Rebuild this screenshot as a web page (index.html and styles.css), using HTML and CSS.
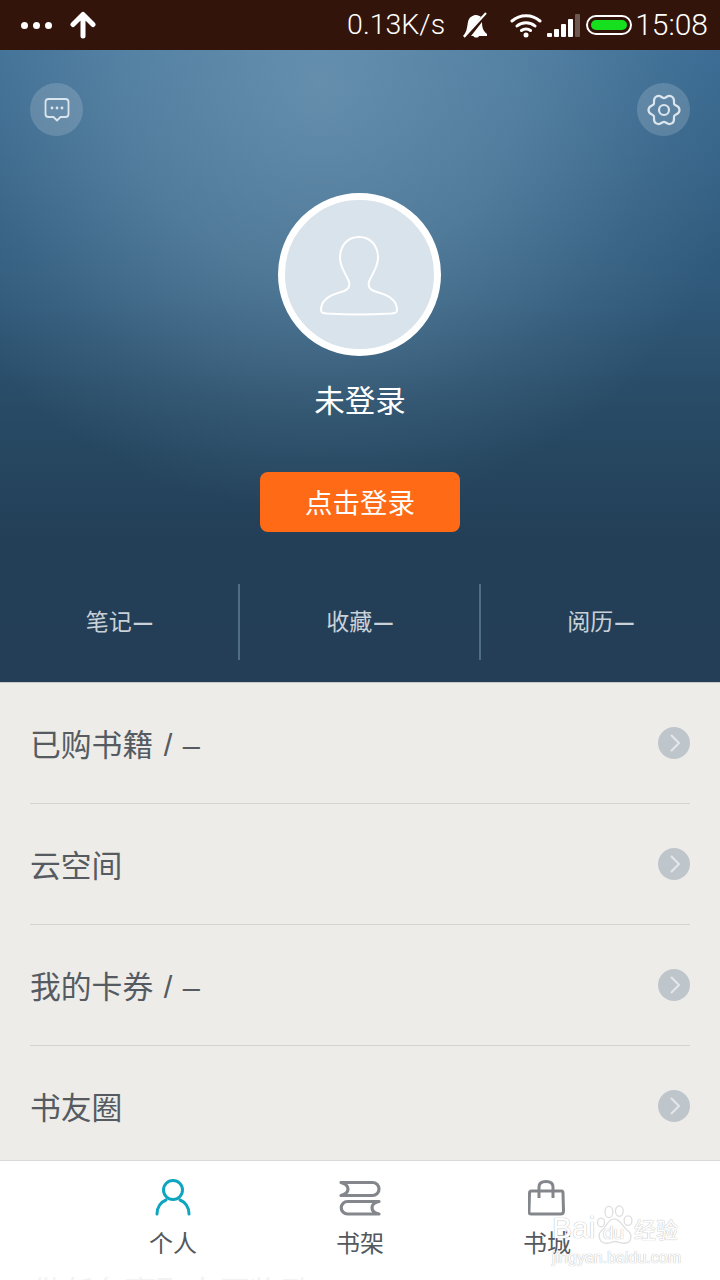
FILE: index.html
```html
<!DOCTYPE html>
<html lang="zh-CN">
  <head>
    <meta charset="UTF-8" />
    <meta name="viewport" content="width=device-width, initial-scale=1.0" />
    <title>个人</title>
    <link rel="stylesheet" href="styles.css">
  </head>
  <body>
    <div class="phone">
      <!-- status bar -->
      <div class="status">
        <div class="status-left">
          <div class="dots"><i></i><i></i><i></i></div>
          <svg class="up-arrow" width="26" height="28" viewBox="0 0 26 28">
            <path d="M13 25V4M3 13.500L13 3.500L23 13.500" fill="none" stroke="#fff" stroke-width="5" stroke-linecap="round" stroke-linejoin="round"/>
          </svg>
        </div>
        <div class="status-right">
          <span class="speed">0.13K/s</span>
          <svg class="bell" width="28" height="26" viewBox="0 0 28 26">
            <path d="M2 24C6 20 6 15 7 10C8 5 12 3 15 3C17 3 19 4 20 5L4 24Z" fill="#fff"/>
            <path d="M10 24L21 10C21 15 22 19 26 22L26 24H18C17.500 26 13 26 12.500 24Z" fill="#fff"/>
            <path d="M3 25L25 1" stroke="#fff" stroke-width="2"/>
          </svg>
          <svg class="wifi" width="32" height="26" viewBox="0 0 32 26">
            <path d="M2 9C10 2 22 2 30 9M7 14C12 9.500 20 9.500 25 14M11.500 18.500C14 16.500 18 16.500 20.500 18.500" fill="none" stroke="#fff" stroke-width="3" stroke-linecap="round"/>
            <circle cx="16" cy="23" r="2.500" fill="#fff"/>
          </svg>
          <div class="signal"><i class="s1"></i><i class="s2"></i><i class="s3"></i><i class="s4"></i><i class="s5"></i></div>
          <div class="battery"><div class="battery-fill"></div></div>
          <span class="clock">15:08</span>
        </div>
      </div>

      <!-- header with avatar -->
      <header class="hero">
        <div class="hero-top">
          <div class="round-btn">
            <svg width="26" height="26" viewBox="0 0 26 26">
              <path d="M4.500 2H21.500Q24.500 2 24.500 5V17Q24.500 20 21.500 20H16.500L13 23.500L9.500 20H4.500Q1.500 20 1.500 17V5Q1.500 2 4.500 2Z" fill="none" stroke="#dbe5ee" stroke-width="1.800" stroke-linejoin="round"/>
              <circle cx="8" cy="11" r="1.400" fill="#dbe5ee"/><circle cx="13" cy="11" r="1.400" fill="#dbe5ee"/><circle cx="18" cy="11" r="1.400" fill="#dbe5ee"/>
            </svg>
          </div>
          <div class="round-btn">
            <svg width="34" height="34" viewBox="0 0 34 34">
              <path d="M32.500 17C32.500 12.500 28.220 12.830 27.220 11.100C26.220 9.370 28.650 5.830 24.750 3.580C20.850 1.330 19 5.200 17 5.200C15 5.200 13.150 1.330 9.250 3.580C5.350 5.830 7.780 9.370 6.780 11.100C5.780 12.830 1.500 12.500 1.500 17C1.500 21.500 5.780 21.170 6.780 22.900C7.780 24.630 5.350 28.170 9.250 30.420C13.150 32.670 15 28.800 17 28.800C19 28.800 20.850 32.670 24.750 30.420C28.650 28.170 26.220 24.630 27.220 22.900C28.220 21.170 32.500 21.500 32.500 17Z" fill="none" stroke="#dbe5ee" stroke-width="2.200" stroke-linejoin="round"/>
              <circle cx="17" cy="17" r="5" fill="none" stroke="#dbe5ee" stroke-width="2.200"/>
            </svg>
          </div>
        </div>
        <div class="avatar">
          <svg width="82" height="82" viewBox="0 0 82 82">
            <path d="M41 3C29 3 22 12 22 24C22 34 29 41 31 48C33 55 27 57 20 59C10 62 3 68 3 76C3 79 5 79 9 79.500C25 80.500 57 80.500 73 79.500C77 79 79 79 79 76C79 68 72 62 62 59C55 57 49 55 51 48C53 41 60 34 60 24C60 12 53 3 41 3Z" fill="none" stroke="#fff" stroke-width="2"/>
          </svg>
        </div>
        <div class="user-name">未登录</div>
        <button class="login-btn">点击登录</button>
        <div class="stats">
          <div class="stat">笔记<span class="dash">–</span></div>
          <div class="stat">收藏<span class="dash">–</span></div>
          <div class="stat">阅历<span class="dash">–</span></div>
        </div>
      </header>

      <!-- menu list -->
      <ul class="menu">
        <li class="menu-row"><span class="row-label">已购书籍 / –</span><span class="chev"><svg width="32" height="32" viewBox="0 0 32 32"><path d="M13 8L21 16L13 24" fill="none" stroke="#e4e7ea" stroke-width="2"/></svg></span></li>
        <li class="menu-row"><span class="row-label">云空间</span><span class="chev"><svg width="32" height="32" viewBox="0 0 32 32"><path d="M13 8L21 16L13 24" fill="none" stroke="#e4e7ea" stroke-width="2"/></svg></span></li>
        <li class="menu-row"><span class="row-label">我的卡券 / –</span><span class="chev"><svg width="32" height="32" viewBox="0 0 32 32"><path d="M13 8L21 16L13 24" fill="none" stroke="#e4e7ea" stroke-width="2"/></svg></span></li>
        <li class="menu-row"><span class="row-label">书友圈</span><span class="chev"><svg width="32" height="32" viewBox="0 0 32 32"><path d="M13 8L21 16L13 24" fill="none" stroke="#e4e7ea" stroke-width="2"/></svg></span></li>
      </ul>

      <!-- bottom tabs -->
      <nav class="tabs">
        <div class="tab">
          <svg width="38" height="38" viewBox="0 0 38 38">
            <circle cx="19" cy="11" r="9.500" fill="none" stroke="#0ea5bf" stroke-width="3"/>
            <path d="M3 35C3 28 7 23 12 21M35 35C35 28 31 23 26 21" fill="none" stroke="#0ea5bf" stroke-width="3" stroke-linecap="round"/>
          </svg>
          <span>个人</span>
        </div>
        <div class="tab">
          <svg width="42" height="38" viewBox="0 0 42 38">
            <path d="M2 3.500H33.500A6.500 6.500 0 0 1 33.500 16.500H2Q9 14.500 9 10Q9 5.500 2 3.500Z" fill="none" stroke="#83878c" stroke-width="3.200" stroke-linejoin="round"/>
            <path d="M40 22.500H8.500A6.250 6.250 0 0 0 8.500 35H40Q33 33.500 33 28.750Q33 24 40 22.500Z" fill="none" stroke="#83878c" stroke-width="3.200" stroke-linejoin="round"/>
          </svg>
          <span>书架</span>
        </div>
        <div class="tab">
          <svg width="38" height="38" viewBox="0 0 38 38">
            <path d="M3.500 12H33.500Q35 12 35 14L35.500 32Q35.500 35 32.500 35H3.500Q0.500 35 1 32L1.500 14Q1.500 12 3.500 12Z" fill="none" stroke="#83878c" stroke-width="3"/>
            <path d="M11 19V8Q11 2.500 18 2.500Q25 2.500 25 8V19" fill="none" stroke="#83878c" stroke-width="3"/>
          </svg>
          <span>书城</span>
        </div>
        <div class="peek">做任务赢取丰厚奖励</div>
      </nav>

      <!-- baidu watermark -->
      <div class="watermark">
        <div class="wm-main">
          <span class="wm-bai">Bai</span>
          <span class="wm-paw">
            <svg width="46" height="46" viewBox="0 0 46 46">
              <g fill="#fff" stroke="#dedede" stroke-width="1.500">
                <ellipse cx="7" cy="20" rx="4" ry="5"/>
                <ellipse cx="16" cy="8" rx="4.500" ry="6.500"/>
                <ellipse cx="28" cy="7" rx="4.500" ry="6"/>
                <ellipse cx="38" cy="18" rx="4.500" ry="5.500"/>
                <path d="M22 16C15 16 14 24 8 29C2 34 5 44 13 44C18 44 19 42 23 42C27 42 29 44 34 44C42 44 44 34 37 29C31 24 29 16 22 16Z"/>
              </g>
            </svg>
            <span class="wm-du">du</span>
          </span>
          <span class="wm-cn">经验</span>
        </div>
        <div class="wm-sub">jingyan.baidu.com</div>
      </div>
    </div>
  </body>
</html>
```

FILE: styles.css
```css
:root {
  --status-bg: #33140a;
  --menu-bg: #edece9;
  --menu-text: #555b61;
  --line: #d4d3cf;
  --orange: #ff6a17;
}

* {
  box-sizing: border-box;
}

body {
  margin: 0;
  font-family: "Noto Sans CJK SC", "Noto Sans", sans-serif;
}

.phone {
  position: relative;
  width: 720px;
  height: 1280px;
  overflow: hidden;
  display: flex;
  flex-direction: column;
  background-color: var(--menu-bg);
}

/* status bar */
.status {
  flex: 0 0 50px;
  display: flex;
  justify-content: space-between;
  align-items: center;
  padding: 0 12px 0 21px;
  background-color: var(--status-bg);
  color: #fff;
}

.status-left,
.status-right {
  display: flex;
  align-items: center;
}

.dots {
  display: flex;
  gap: 5px;
  margin-right: 18px;
}

.dots i {
  width: 7px;
  height: 7px;
  border-radius: 50%;
  background-color: #fff;
}

.speed,
.clock {
  font-family: Roboto, "Liberation Sans", sans-serif;
  font-size: 30px;
  font-weight: 300;
  line-height: 50px;
}

.speed {
  font-size: 28.5px;
}

.bell {
  margin-left: 16px;
}

.wifi {
  margin-left: 21px;
}

.signal {
  display: flex;
  align-items: flex-end;
  gap: 2px;
  height: 24px;
  margin-left: 5px;
}

.signal i {
  width: 5px;
  border-radius: 1px;
  background-color: #fff;
}

.s1 { height: 4px; }
.s2 { height: 8px; }
.s3 { height: 13px; }
.s4 { height: 18px; }
.signal .s5 { height: 23px; background-color: #6d5850; }

.battery {
  width: 46px;
  height: 20px;
  margin-left: 6px;
  padding: 3px;
  border: 2px solid #fff;
  border-radius: 10px;
}

.battery-fill {
  height: 100%;
  border-radius: 6px;
  background-color: #16e01e;
}

.clock {
  margin-left: 3px;
}

/* header */
.hero {
  flex: 0 0 632px;
  display: flex;
  flex-direction: column;
  align-items: center;
  padding: 33px 30px 0;
  background:
    radial-gradient(ellipse 440px 430px at 320px 30px,
      rgba(112, 152, 180, 0.8) 0%,
      rgba(112, 152, 180, 0.5) 45%,
      rgba(112, 152, 180, 0.16) 78%,
      rgba(112, 152, 180, 0) 100%),
    linear-gradient(180deg, #396a92 0%, #2f5879 38%, #284a64 58%, #233f57 78%, #233e56 100%);
}

.hero-top {
  align-self: stretch;
  display: flex;
  justify-content: space-between;
}

.round-btn {
  width: 53px;
  height: 53px;
  display: flex;
  align-items: center;
  justify-content: center;
  border-radius: 50%;
  background-color: rgba(255, 255, 255, 0.16);
}

.avatar {
  width: 163px;
  height: 163px;
  margin: 57px 2px 0 0;
  display: flex;
  align-items: center;
  justify-content: center;
  border: 7px solid #fff;
  border-radius: 50%;
  background-color: #d9e3eb;
}

.user-name {
  margin-top: 21px;
  font-size: 30.5px;
  line-height: 44px;
  color: #fff;
}

.login-btn {
  width: 200px;
  height: 60px;
  margin-top: 51px;
  padding: 0 0 2px;
  border: none;
  border-radius: 8px;
  background-color: var(--orange);
  color: #fff;
  font-family: inherit;
  font-size: 27.5px;
}

.stats {
  align-self: stretch;
  display: flex;
  margin: 52px -30px 0;
}

.stat {
  flex: 1;
  height: 76px;
  padding-bottom: 4px;
  display: flex;
  align-items: center;
  justify-content: center;
  font-size: 23px;
  color: #c9d1d8;
}

.stat:first-child {
  flex: 0 0 238px;
}

.stat:nth-child(2) {
  flex: 0 0 241px;
}

.stat + .stat {
  border-left: 2px solid #4f6d85;
}

.dash {
  margin-left: 2px;
  font-family: "Liberation Sans", sans-serif;
  font-size: 33px;
  line-height: 1;
}

/* menu */
.menu {
  flex: 1;
  margin: 0;
  padding: 0 30px;
  list-style: none;
  border-top: 1px solid #c9c8c5;
}

.menu-row {
  height: 121px;
  display: flex;
  align-items: center;
  justify-content: space-between;
  font-family: "Liberation Sans", "Noto Sans CJK SC", sans-serif;
  font-size: 30.8px;
  word-spacing: 2px;
  color: var(--menu-text);
  border-bottom: 1px solid var(--line);
}

.row-label {
  padding-bottom: 2px;
}

.chev {
  width: 32px;
  height: 32px;
  border-radius: 50%;
  background-color: #bfc6cb;
}

.chev svg {
  display: block;
}

/* tabs */
.tabs {
  position: absolute;
  left: 0;
  right: 0;
  bottom: 0;
  height: 120px;
  display: flex;
  justify-content: center;
  gap: 137px;
  padding-top: 18px;
  background-color: #fff;
  border-top: 1px solid #d9d9d9;
  overflow: hidden;
}

.tab {
  width: 50px;
  display: flex;
  flex-direction: column;
  align-items: center;
  gap: 8px;
  font-size: 24px;
  line-height: 34px;
  color: #53585d;
}

.peek {
  position: absolute;
  left: 32px;
  top: 107px;
  font-size: 31px;
  line-height: 44px;
  white-space: nowrap;
  color: #f3f3f3;
}

/* baidu watermark */
.watermark {
  position: absolute;
  left: 552px;
  top: 1203px;
  width: 130px;
  color: #fff;
  text-shadow: 0 0 1px #bdbdbd, 0 0 1px #bdbdbd;
  font-family: "Liberation Sans", "Noto Sans CJK SC", sans-serif;
}

.wm-main {
  display: flex;
  align-items: flex-end;
  height: 42px;
}

.wm-bai {
  width: 46px;
  font-size: 30px;
  line-height: 34px;
}

.wm-paw {
  position: relative;
  width: 36px;
  height: 40px;
}

.wm-paw svg {
  position: absolute;
  left: -3px;
  top: 0;
  width: 40px;
  height: 40px;
}

.wm-du {
  position: absolute;
  left: 5px;
  top: 18px;
  font-size: 19px;
  line-height: 20px;
  color: #fff;
}

.wm-cn {
  font-size: 22px;
  line-height: 28px;
}

.wm-sub {
  margin-top: 4px;
  font-size: 16px;
  line-height: 18px;
  white-space: nowrap;
}
```
